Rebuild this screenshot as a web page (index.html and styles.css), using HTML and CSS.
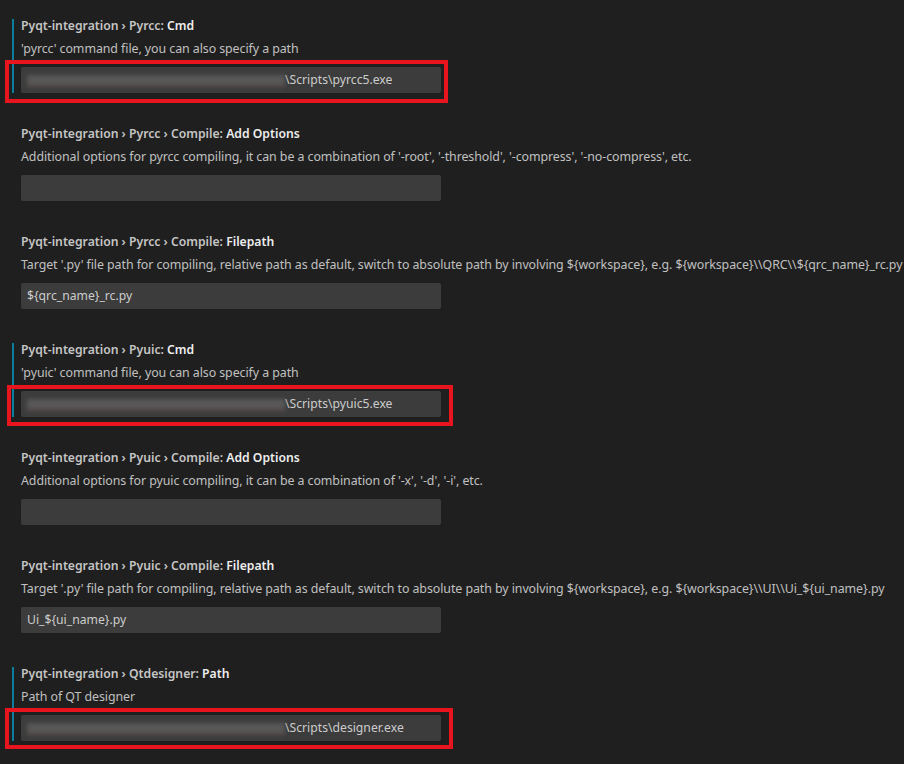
FILE: index.html
```html
<!DOCTYPE html>
<html>
<head>
<meta charset="utf-8">
<link rel="stylesheet" href="styles.css">
</head>
<body>
<div class="list">
  <div class="item modified">
    <div class="title"><span class="cat">Pyqt-integration › Pyrcc: </span><span class="label">Cmd</span></div>
    <div class="desc">'pyrcc' command file, you can also specify a path</div>
    <div class="input"><span class="blur"></span><span>\Scripts\pyrcc5.exe</span><span class="mark mark1"></span></div>
  </div>
  <div class="item">
    <div class="title"><span class="cat">Pyqt-integration › Pyrcc › Compile: </span><span class="label">Add Options</span></div>
    <div class="desc">Additional options for pyrcc compiling, it can be a combination of '-root', '-threshold', '-compress', '-no-compress', etc.</div>
    <div class="input"></div>
  </div>
  <div class="item">
    <div class="title"><span class="cat">Pyqt-integration › Pyrcc › Compile: </span><span class="label">Filepath</span></div>
    <div class="desc">Target '.py' file path for compiling, relative path as default, switch to absolute path by involving ${workspace}, e.g. ${workspace}\\QRC\\${qrc_name}_rc.py</div>
    <div class="input"><span>${qrc_name}_rc.py</span></div>
  </div>
  <div class="item modified">
    <div class="title"><span class="cat">Pyqt-integration › Pyuic: </span><span class="label">Cmd</span></div>
    <div class="desc">'pyuic' command file, you can also specify a path</div>
    <div class="input"><span class="blur"></span><span>\Scripts\pyuic5.exe</span><span class="mark mark2"></span></div>
  </div>
  <div class="item">
    <div class="title"><span class="cat">Pyqt-integration › Pyuic › Compile: </span><span class="label">Add Options</span></div>
    <div class="desc">Additional options for pyuic compiling, it can be a combination of '-x', '-d', '-i', etc.</div>
    <div class="input"></div>
  </div>
  <div class="item">
    <div class="title"><span class="cat">Pyqt-integration › Pyuic › Compile: </span><span class="label">Filepath</span></div>
    <div class="desc">Target '.py' file path for compiling, relative path as default, switch to absolute path by involving ${workspace}, e.g. ${workspace}\\UI\\Ui_${ui_name}.py</div>
    <div class="input"><span>Ui_${ui_name}.py</span></div>
  </div>
  <div class="item modified">
    <div class="title"><span class="cat">Pyqt-integration › Qtdesigner: </span><span class="label">Path</span></div>
    <div class="desc">Path of QT designer</div>
    <div class="input"><span class="blur"></span><span>\Scripts\designer.exe</span><span class="mark mark3"></span></div>
  </div>
</div>
</body>
</html>
```

FILE: styles.css
```css
html, body {
  margin: 0;
  padding: 0;
  background: #1f1f1f;
}
body {
  width: 904px;
  height: 764px;
  overflow: hidden;
  font-family: "Noto Sans", "Open Sans", sans-serif;
  font-size: 12.4px;
  color: #cccccc;
}
.list {
  display: flex;
  flex-direction: column;
}
.item {
  position: relative;
  height: 108px;
  box-sizing: border-box;
  padding: 17px 0 0 21px;
  display: flex;
  flex-direction: column;
}
.item.modified::before {
  content: "";
  position: absolute;
  left: 12px;
  top: 19px;
  height: 74px;
  width: 2px;
  background: #0c7d9d;
}
.title {
  font-size: 12.2px;
  line-height: 18px;
  height: 18px;
  font-weight: 600;
  white-space: nowrap;
}
.cat {
  color: #c5c5c5;
}
.label {
  color: #eeeeee;
}
.desc {
  margin-top: 5px;
  line-height: 18px;
  height: 18px;
  color: #c0c0c0;
  letter-spacing: -0.07px;
  white-space: nowrap;
}
.input {
  position: relative;
  margin-top: 9px;
  width: 420px;
  height: 26px;
  box-sizing: border-box;
  background: #3c3c3c;
  border-radius: 2px;
  padding: 0 6px;
  display: flex;
  align-items: center;
  font-size: 12.2px;
  color: #cccccc;
  line-height: 26px;
  white-space: nowrap;
}
.blur {
  display: inline-block;
  width: 258px;
  height: 12px;
  margin-top: 2px;
  background: linear-gradient(180deg, #5c5c5c 0%, #5e5e5e 60%, #5a4848 100%);
  filter: blur(2px);
  opacity: 0.85;
}
.mark {
  position: absolute;
  border: 4px solid #e8141e;
  pointer-events: none;
}
.mark1 {
  left: -16px;
  right: -7px;
  top: -7px;
  bottom: -10px;
}
.mark2 {
  left: -14px;
  right: -12px;
  top: -6px;
  bottom: -9px;
}
.mark3 {
  left: -16px;
  right: -12px;
  top: -7px;
  bottom: -8px;
}
```
